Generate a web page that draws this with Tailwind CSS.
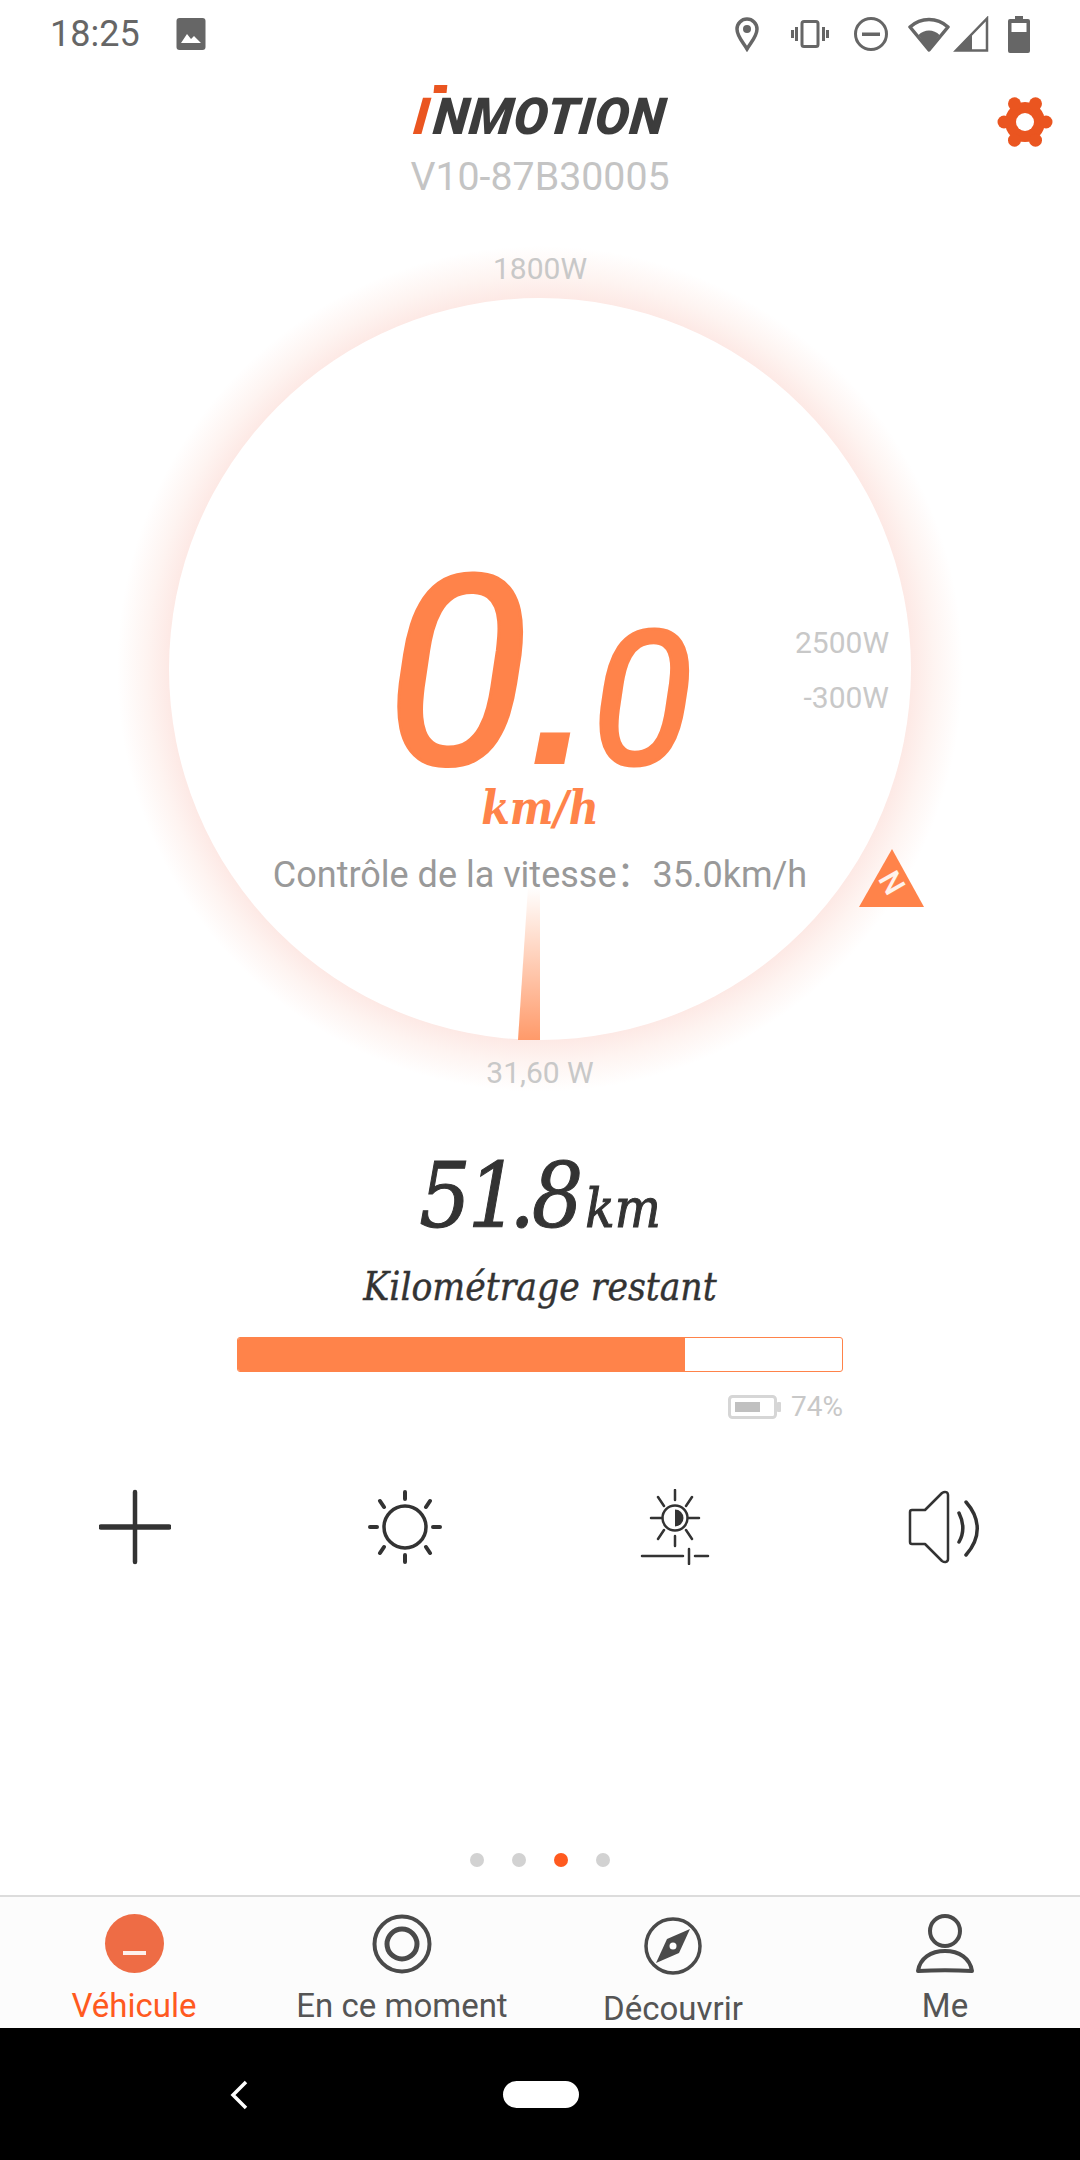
<!DOCTYPE html>
<html lang="fr">
<head>
  <meta charset="UTF-8" />
  <title>Inmotion V10</title>
  <script src="https://cdn.jsdelivr.net/npm/@tailwindcss/browser@4"></script>
</head>
<body class="bg-white font-['Roboto',sans-serif]">
<div class="w-[1080px] h-[2160px] flex flex-col overflow-hidden bg-white">

  <!-- Status bar -->
  <div class="h-[68px] flex items-center pl-[50px] text-[#666666] shrink-0">
    <span class="text-[36px] leading-none w-[126px]">18:25</span>
    <svg class="w-[30px] h-[32px]" viewBox="0 0 30 32"><rect x="0.5" y="0" width="29" height="32" rx="3" fill="#666"/><path d="M5 25l6-9 4 5 3-3 7 7z" fill="#fff"/></svg>
    <div class="ml-auto flex items-center h-full">
      <svg class="w-[26px] h-[36px]" viewBox="0 0 26 36"><path d="M13 33C8 25 3 20 3 13a10 10 0 0 1 20 0c0 7-5 12-10 20z" fill="none" stroke="#666" stroke-width="3.5"/><circle cx="13" cy="13" r="4" fill="#666"/></svg>
      <svg class="w-[38px] h-[28px] ml-[31px]" viewBox="0 0 38 28"><rect x="11" y="1.5" width="16" height="25" rx="2" fill="none" stroke="#666" stroke-width="3"/><path d="M5.500 7v14M1.500 10v8M32.500 7v14M36.500 10v8" stroke="#666" stroke-width="3"/></svg>
      <svg class="w-[36px] h-[36px] ml-[24px]" viewBox="0 0 36 36"><circle cx="18" cy="18" r="15.500" fill="none" stroke="#666" stroke-width="3"/><rect x="9" y="16.500" width="18" height="3.500" fill="#666"/></svg>
      <svg class="w-[42px] h-[36px] ml-[19px]" viewBox="0 0 42 36"><path d="M21 34L2 11C13 1 29 1 40 11z" fill="none" stroke="#666" stroke-width="3.500" stroke-linejoin="round"/><path d="M21 34L10.500 19C16 13 26 13 31.500 19z" fill="#666"/></svg>
      <svg class="w-[36px] h-[36px] ml-[3px]" viewBox="0 0 36 36"><path d="M34 2.500V34.500H3z" fill="none" stroke="#666" stroke-width="2.500"/><path d="M19 17.500V35H2z" fill="#666"/></svg>
      <svg class="w-[22px] h-[37px] ml-[19px] mr-[50px]" viewBox="0 0 22 37"><path d="M7 0h8v3h5a2 2 0 0 1 2 2v30a2 2 0 0 1-2 2H2a2 2 0 0 1-2-2V5a2 2 0 0 1 2-2h5z" fill="#666"/><rect x="3.500" y="7" width="15" height="9" fill="#fff"/></svg>
    </div>
  </div>

  <!-- Header: logo, model -->
  <div class="relative h-[152px] flex flex-col items-center shrink-0">
    <div class="relative mt-[26px] h-[46px] flex items-end font-black italic text-[51px] leading-[46px] text-[#3c3c3c] -skew-x-[6deg]">
      <span class="absolute left-[17px] top-[-9px] w-[13px] h-[8px] bg-[#ea5520]"></span>
      <span class="text-[#ea5520] mr-[5px]">I</span><span class="tracking-[1px]">NMOTION</span>
    </div>
    <div class="mt-[15px] text-[39.300px] leading-[44px] text-[#c4c4c4]">V10-87B30005</div>
    <svg class="absolute right-[27px] top-[26px] w-[56px] h-[56px]" viewBox="0 0 56 56">
      <g fill="#ea5520">
        <circle cx="28" cy="28" r="20"/>
        <circle cx="49" cy="28" r="6.500"/><circle cx="7" cy="28" r="6.500"/>
        <circle cx="17.500" cy="9.800" r="6.500"/><circle cx="38.500" cy="9.800" r="6.500"/>
        <circle cx="17.500" cy="46.200" r="6.500"/><circle cx="38.500" cy="46.200" r="6.500"/>
      </g>
      <circle cx="28" cy="28" r="9" fill="#fff"/>
    </svg>
  </div>

  <!-- Gauge -->
  <div class="relative h-[880px] shrink-0">
    <div class="absolute left-[117px] top-[26px] w-[846px] h-[846px] rounded-full bg-[radial-gradient(closest-side,#fde9e5_87.700%,#fef4f1_93%,#ffffff_100%)]"></div>
    <div class="absolute left-[169px] top-[78px] w-[742px] h-[742px] rounded-full bg-white"></div>

    <div class="absolute inset-x-0 top-[29px] text-center text-[30px] leading-[40px] text-[#c8c8c8]">1800W</div>
    <div class="absolute right-[191px] top-[403px] text-[30px] leading-[40px] text-[#c8c8c8]">2500W</div>
    <div class="absolute right-[191px] top-[458px] text-[30px] leading-[40px] text-[#c8c8c8]">-300W</div>
    <div class="absolute inset-x-0 top-[833px] text-center text-[30px] leading-[40px] text-[#c8c8c8]">31,60 W</div>

    <!-- speed -->
    <div class="absolute left-[385px] top-[354px] flex items-baseline italic text-[#ff834a]">
      <span class="text-[265px] leading-[200px] [-webkit-text-stroke:3px_#ff834a]">0</span><span class="font-['Liberation_Sans',sans-serif] font-bold text-[212px] leading-[100px] ml-[0px]">.</span><span class="text-[187px] leading-[140px] ml-[3px] [-webkit-text-stroke:3px_#ff834a]">0</span>
    </div>
    <div class="absolute inset-x-0 top-[566px] text-center font-['DejaVu_Serif_Condensed','DejaVu_Serif',serif] italic font-bold text-[46px] leading-[44px] text-[#ff834a]">km/h</div>
    <div class="absolute inset-x-0 top-[632px] text-center text-[36px] leading-[46px] text-[#999999] font-['Roboto','Noto_Sans_CJK_SC',sans-serif]">Contrôle de la vitesse：35.0km/h</div>

    <!-- needle -->
    <svg class="absolute left-[518px] top-[667px] w-[22px] h-[153px]" viewBox="0 0 22 153">
      <defs><linearGradient id="needle" x1="0" y1="1" x2="0" y2="0"><stop offset="0" stop-color="#ff9a6a"/><stop offset="1" stop-color="#ffffff"/></linearGradient></defs>
      <path d="M10 0H22V153H0z" fill="url(#needle)"/>
    </svg>

    <!-- pointer -->
    <div class="absolute left-[859px] top-[629px] w-[65px] h-[58px]">
      <svg class="w-full h-full" viewBox="0 0 65 58"><path d="M33 0L65 58H0z" fill="#ff834a"/></svg>
      <span class="absolute inset-x-0 top-[20px] text-center rotate-[60deg] text-[30px] leading-[28px] font-medium text-white/90">N</span>
    </div>
  </div>

  <!-- Range -->
  <div class="mt-[36px] h-[120px] flex items-center justify-center text-[#333333] font-['DejaVu_Serif_Condensed','DejaVu_Serif',serif] italic [-webkit-text-stroke:1px_#333333] shrink-0">
    <span class="text-[90px] leading-none tracking-[-3px]">51</span><span class="ml-[-7px] text-[90px] leading-none tracking-[-3px]">.8</span><span class="ml-[5px] text-[54px] leading-none self-end mb-[20px]">km</span>
  </div>
  <div class="mt-[-4px] h-[70px] flex items-center justify-center text-[#333333] font-['DejaVu_Serif_Condensed','DejaVu_Serif',serif] italic text-[38.600px] [-webkit-text-stroke:0.4px_#333333] shrink-0">Kilométrage restant</div>

  <div class="mt-[15px] mx-[237px] h-[35px] border-[1.500px] border-[#ff834a] rounded-[3px] overflow-hidden shrink-0">
    <div class="h-full w-[74%] bg-[#ff834a]"></div>
  </div>
  <div class="mt-[22px] mx-[237px] h-[26px] flex items-center justify-end text-[28px] leading-none text-[#c8c8c8] shrink-0">
    <svg class="w-[54px] h-[24px] mr-[9px]" viewBox="0 0 54 24"><rect x="1.500" y="1.500" width="46" height="21" rx="3" fill="none" stroke="#d6d6d6" stroke-width="3"/><rect x="7" y="7" width="25" height="10" fill="#c0c0c0"/><rect x="49" y="7" width="4" height="10" rx="1" fill="#d6d6d6"/></svg>
    <span>74%</span>
  </div>

  <!-- Controls -->
  <div class="mt-[69px] grid grid-cols-4 h-[76px] shrink-0">
    <div class="flex justify-center">
      <svg class="w-[72px] h-[76px]" viewBox="0 0 72 76"><path d="M36 3V73" stroke="#333" stroke-width="4.500" stroke-linecap="round"/><path d="M2 38H70" stroke="#333" stroke-width="5.500" stroke-linecap="round"/></svg>
    </div>
    <div class="flex justify-center">
      <svg class="w-[76px] h-[76px]" viewBox="0 0 76 76" fill="none" stroke="#333" stroke-linecap="round"><circle cx="38" cy="38" r="21" stroke-width="3.500"/><path d="M38 3v7M38 66v7M3 38h7M66 38h7M13 12l4 6M63 12l-4 6M13 64l4-6M63 64l-4-6" stroke-width="4"/></svg>
    </div>
    <div class="flex justify-center">
      <svg class="w-[70px] h-[76px]" viewBox="0 0 70 76" fill="none" stroke="#333" stroke-linecap="round"><circle cx="35" cy="29" r="12.500" stroke-width="2.500"/><path d="M35 20.500a8.500 8.500 0 0 1 0 17z" fill="#333" stroke="none"/><path d="M35 1v10M35 47v10M11 29h11M48 29h11M18 8l6 9M52 8l-6 9M18 50l6-9M52 50l-6-9" stroke-width="2.500"/><path d="M2 67H43M49 60V75M55 67H68" stroke-width="2.500"/></svg>
    </div>
    <div class="flex justify-center">
      <svg class="w-[76px] h-[76px]" viewBox="0 0 76 76" fill="none" stroke="#333" stroke-width="2.500" stroke-linejoin="round" stroke-linecap="round"><path d="M5 21H18L35 4c3-2 6-1 6 2V70c0 3-3 4-6 2L18 55H5c-2 0-2-2-2-2V23s0-2 2-2z"/><path d="M52 24c5 10 5 20 0 29M59 13c15 17 15 36 0 53" stroke-width="3.500"/></svg>
    </div>
  </div>

  <!-- Pager -->
  <div class="mt-auto mb-[28px] flex justify-center gap-[28px] shrink-0">
    <span class="w-[14px] h-[14px] rounded-full bg-[#d2d2d2]"></span>
    <span class="w-[14px] h-[14px] rounded-full bg-[#d2d2d2]"></span>
    <span class="w-[14px] h-[14px] rounded-full bg-[#ff5a1f]"></span>
    <span class="w-[14px] h-[14px] rounded-full bg-[#d2d2d2]"></span>
  </div>

  <!-- Tabs -->
  <div class="h-[133px] grid grid-cols-[268px_268px_274px_270px] border-t-2 border-[#dcdcdc] bg-[#fcfcfc] overflow-hidden shrink-0">
    <div class="flex flex-col items-center pt-[17px]">
      <div class="relative w-[59px] h-[59px] rounded-full bg-[#ee6c45]"><span class="absolute left-[18px] top-[37px] w-[23px] h-[4px] bg-white/90"></span></div>
      <span class="mt-[13px] text-[33px] leading-[40px] text-[#ff5a1f]">Véhicule</span>
    </div>
    <div class="flex flex-col items-center pt-[17px]">
      <svg class="w-[60px] h-[60px]" viewBox="0 0 60 60" fill="none" stroke="#4a4a4a"><circle cx="30" cy="30" r="27.500" stroke-width="4"/><circle cx="30" cy="30" r="15" stroke-width="5"/></svg>
      <span class="mt-[12px] text-[33px] leading-[40px] text-[#555555]">En ce moment</span>
    </div>
    <div class="flex flex-col items-center pt-[20px]">
      <svg class="w-[58px] h-[58px]" viewBox="0 0 58 58"><circle cx="29" cy="29" r="27" fill="none" stroke="#4a4a4a" stroke-width="3.500"/><path d="M46 12L35 36 12 46 23 22z" fill="#4a4a4a"/><circle cx="29" cy="29" r="3.500" fill="#fff"/></svg>
      <span class="mt-[14px] text-[33px] leading-[40px] text-[#555555]">Découvrir</span>
    </div>
    <div class="flex flex-col items-center pt-[17px]">
      <svg class="w-[60px] h-[60px]" viewBox="0 0 60 60" fill="none" stroke="#4a4a4a" stroke-width="4"><circle cx="30" cy="17" r="15"/><path d="M3 57C5 44 16 37 30 37S55 44 57 57C40 56 20 56 3 57z" stroke-linejoin="round"/></svg>
      <span class="mt-[12px] text-[33px] leading-[40px] text-[#555555]">Me</span>
    </div>
  </div>

  <!-- Android nav -->
  <div class="relative h-[132px] bg-black shrink-0">
    <svg class="absolute left-[229px] top-[52px] w-[20px] h-[30px]" viewBox="0 0 20 30"><path d="M17 2L4 15 17 28" fill="none" stroke="#fff" stroke-width="3.500"/></svg>
    <div class="absolute left-[503px] top-[53px] w-[76px] h-[27px] rounded-full bg-white"></div>
  </div>
</div>
</body>
</html>
